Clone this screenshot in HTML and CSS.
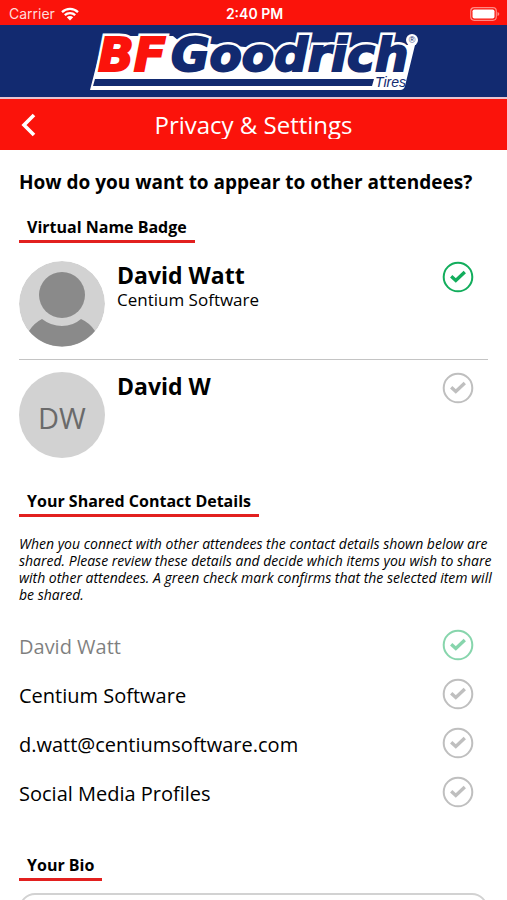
FILE: index.html
```html
<!DOCTYPE html>
<html lang="en">
<head>
<meta charset="utf-8">
<meta name="viewport" content="width=device-width, initial-scale=1">
<title>Privacy &amp; Settings</title>
<link rel="stylesheet" href="styles.css">
</head>
<body>
<svg class="defs" width="0" height="0" aria-hidden="true">
  <symbol id="check" viewBox="0 0 32 32">
    <circle cx="16" cy="16" r="14.3" fill="none" stroke="currentColor" stroke-width="2"/>
    <path d="M9.200 15.200 13.800 19.400 22.800 11" fill="none" stroke="currentColor" stroke-width="3.400"/>
  </symbol>
</svg>

<div class="status">
  <div class="status-left">
    <span>Carrier</span>
    <svg class="wifi" viewBox="0 0 18 14" aria-hidden="true">
      <path d="M1 5.200a11.500 11.500 0 0 1 16 0M3.800 8.200a7.500 7.500 0 0 1 10.400 0" fill="none" stroke="currentColor" stroke-width="2.300"/>
      <path d="M9 13.500 5.800 10.300a4.600 4.600 0 0 1 6.400 0z" fill="currentColor"/>
    </svg>
  </div>
  <time class="status-time">2:40 PM</time>
  <svg class="battery" viewBox="0 0 30 14" aria-hidden="true">
    <rect x="0.700" y="0.700" width="25.600" height="12.600" rx="3.500" fill="none" stroke="#ff8a84" stroke-width="1.200"/>
    <rect x="2.500" y="2.500" width="22" height="9" rx="1.800" fill="#fff"/>
    <path d="M27.500 5v4q1.800-.6 1.800-2t-1.800-2z" fill="#ff8a84"/>
  </svg>
</div>

<div class="brand">
  <svg class="logo" viewBox="0 0 330 60" role="img" aria-label="BFGoodrich Tires">
    <path d="M15 5 1 59H311Q315 59 316 55L326 14 300 14 200 20 90 10 84 5Z" fill="#fff"/>
    <g class="logo-word logo-outline"><text x="9" y="40">BF</text><text x="82" y="40">Goodrich</text></g>
    <g class="logo-word"><text class="logo-bf" x="9" y="40">BF</text><text class="logo-goodrich" x="82" y="40">Goodrich</text></g>
    <path d="M6 48H285L283 55H4Z" fill="#122a70"/>
    <text class="logo-tires" x="286" y="56">Tires</text>
    <circle cx="323" cy="9" r="6" fill="#fff"/>
    <text class="logo-reg" x="323" y="12">®</text>
  </svg>
</div>

<header class="bar">
  <button class="back" type="button" aria-label="Back">
    <svg viewBox="0 0 24 24" aria-hidden="true"><path d="M18 2 8 12l10 10" fill="none" stroke="currentColor" stroke-width="3.600"/></svg>
  </button>
  <h1>Privacy &amp; Settings</h1>
</header>

<main>
  <h2 class="question">How do you want to appear to other attendees?</h2>

  <h3 class="section">Virtual Name Badge</h3>
  <div class="badges">
    <div class="badge">
      <svg class="avatar" viewBox="0 0 86 86" aria-hidden="true">
        <circle cx="43" cy="43" r="43" fill="#d2d2d2"/>
        <circle cx="43" cy="34" r="23" fill="#8a8a8a"/>
        <path d="M10 70Q15 62 23 58 32 65 43 65T62 58Q71 62 76 70A43 43 0 0 1 10 70Z" fill="#8a8a8a"/>
      </svg>
      <div class="who"><strong>David Watt</strong><span>Centium Software</span></div>
      <button class="tick on" type="button" aria-label="Show full name and company" aria-pressed="true"><svg><use href="#check"/></svg></button>
    </div>
    <div class="badge">
      <div class="avatar initials">DW</div>
      <div class="who"><strong>David W</strong></div>
      <button class="tick" type="button" aria-label="Show short name" aria-pressed="false"><svg><use href="#check"/></svg></button>
    </div>
  </div>

  <h3 class="section">Your Shared Contact Details</h3>
  <p class="note">When you connect with other attendees the contact details shown below are shared. Please review these details and decide which items you wish to share with other attendees. A green check mark confirms that the selected item will be shared.</p>
  <ul class="details">
    <li class="fixed"><span>David Watt</span><button class="tick on" type="button" disabled aria-label="Share name" aria-pressed="true"><svg><use href="#check"/></svg></button></li>
    <li><span>Centium Software</span><button class="tick" type="button" aria-label="Share company" aria-pressed="false"><svg><use href="#check"/></svg></button></li>
    <li><span>d.watt@centiumsoftware.com</span><button class="tick" type="button" aria-label="Share email" aria-pressed="false"><svg><use href="#check"/></svg></button></li>
    <li><span>Social Media Profiles</span><button class="tick" type="button" aria-label="Share social media" aria-pressed="false"><svg><use href="#check"/></svg></button></li>
  </ul>

  <h3 class="section" id="bio-title">Your Bio</h3>
  <textarea class="bio" aria-labelledby="bio-title"></textarea>
</main>
</body>
</html>
```
FILE: styles.css
```css
* { box-sizing: border-box; }
html { height: 100%; overflow: hidden; }
body {
  margin: 0;
  height: 100%;
  overflow: hidden;
  background: #fff;
  color: #000;
  font-family: "Open Sans", "Noto Sans", sans-serif;
}
button { border: 0; padding: 0; background: none; color: inherit; font: inherit; }
h1, h2, h3, p, ul { margin: 0; padding: 0; }
svg { display: block; }
.defs { position: absolute; }

.status {
  display: grid;
  grid-template-columns: 1fr auto 1fr;
  align-items: center;
  height: 25px;
  padding: 2px 7px 0 9px;
  background: #fb130b;
  color: #fff;
  font: 14px/20px Inter, sans-serif;
}
.status-left { display: flex; align-items: center; gap: 6px; color: #ffdcda; }
.wifi { width: 18px; height: 14px; color: #fff; }
.status-time { font-weight: 600; }
.battery { width: 30px; height: 14px; justify-self: end; }

.brand {
  display: flex;
  justify-content: center;
  height: 74px;
  padding-top: 6px;
  background: #122a70;
  border-bottom: 2px solid #e8c4d0;
}
.logo { width: 330px; height: 60px; overflow: visible; }
.logo-word {
  font: italic bold 47px "DejaVu Sans", sans-serif;
  stroke-width: 2px;
}
.logo-outline { fill: #fff; stroke: #fff; stroke-width: 7px; }
.logo-bf { fill: #fb130b; stroke: #fb130b; }
.logo-goodrich { fill: #122a70; stroke: #122a70; }
.logo-tires { font: italic 14px "Liberation Sans Narrow", "Liberation Sans", sans-serif; fill: #122a70; }
.logo-reg { font: 9px "Liberation Sans", sans-serif; fill: #122a70; text-anchor: middle; }

.bar {
  display: grid;
  grid-template-columns: 40px 1fr 40px;
  align-items: center;
  height: 51px;
  padding: 0 16px;
  background: #fb130b;
  color: #fff;
}
.back svg { width: 24px; height: 24px; }
.bar h1 {
  height: 28px;
  overflow: hidden;
  text-align: center;
  font-size: 24px;
  line-height: 28px;
  font-weight: 400;
}

main { padding: 18px 19px 0; }
.question { font-size: 19px; line-height: 28px; font-weight: 700; }
.section {
  width: fit-content;
  margin-top: 19px;
  padding: 0 8px 1px;
  border-bottom: 3px solid #e2201f;
  font-size: 16px;
  line-height: 24px;
  font-weight: 700;
}

.badges { padding-top: 6px; }
.badge { display: flex; align-items: flex-start; gap: 12px; padding: 12px 14px 12px 0; }
.badge + .badge { border-top: 1px solid #c4c4c4; }
.avatar { flex: none; width: 86px; height: 86px; border-radius: 50%; }
.initials {
  display: grid;
  place-items: center;
  padding-top: 4px;
  background: #d2d2d2;
  color: #6a6a6a;
  font-size: 29px;
}
.who { flex: 1; display: flex; flex-direction: column; }
.who strong { font-size: 23px; line-height: 28px; }
.who span { font-size: 17px; line-height: 22px; }
.tick { flex: none; color: #bfbfbf; }
.tick svg { width: 32px; height: 32px; }
.tick.on { color: #12ad5c; }

.note { margin: 18px -10px 0 0; font-size: 14px; line-height: 17px; font-style: italic; }
.details { padding: 17px 14px 18px 0; list-style: none; }
.details li {
  display: flex;
  align-items: center;
  justify-content: space-between;
  height: 49px;
  font-size: 20px;
}
.details span { padding-top: 4px; }
.fixed { opacity: 0.5; }
.bio {
  display: block;
  width: 100%;
  height: 120px;
  margin-top: 12px;
  border: 2px solid #d2d2d2;
  border-radius: 16px;
  background: #fff;
  resize: none;
}
```
